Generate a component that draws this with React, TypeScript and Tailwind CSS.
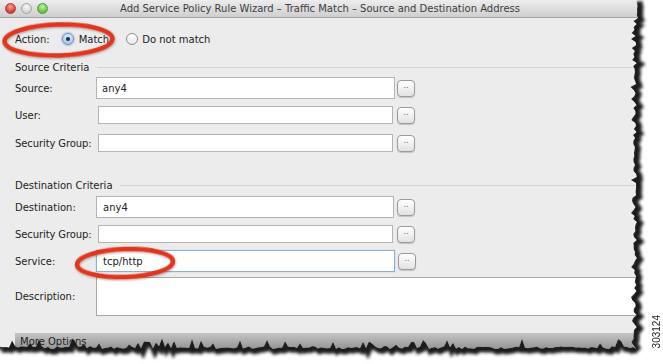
import React from "react";

function rnd(i: number) {
  const x = Math.sin(i * 12.9898 + 78.233) * 43758.5453;
  return x - Math.floor(x);
}

function tornPoints() {
  const pts: [number, number][] = [];
  // right edge, top to bottom
  for (let y = 0; y <= 344; y += 3) {
    let x = 633 + rnd(y) * 4;
    if (rnd(y + 500) > 0.85) x -= 3;
    if (y < 20) x = 636 + rnd(y) * 2;
    pts.push([x, y]);
  }
  // bottom edge, right to left
  for (let x = 636; x >= 0; x -= 3) {
    let y = 346 + rnd(x + 1000) * 3;
    if (rnd(x + 2000) > 0.82) y -= 4 + rnd(x + 3000) * 5;
    pts.push([x, y]);
  }
  pts.push([0, 348]);
  return pts;
}

const PTS = tornPoints();
const polyStr = PTS.map((p) => `${p[0].toFixed(1)},${p[1].toFixed(1)}`).join(" L");
const windowPath = `M0,0 L${polyStr} Z`;
const outsidePath = `M0,0 H663 V364 H0 Z ${windowPath}`;
const edgeLine = `M${polyStr}`;

function TornOverlay() {
  return (
    <svg className="pointer-events-none absolute left-0 top-0" width={663} height={364}>
      <defs>
        <filter id="blur" x="-10%" y="-10%" width="120%" height="120%">
          <feGaussianBlur stdDeviation="1.7" />
        </filter>
        <clipPath id="outside">
          <path d={outsidePath} clipRule="evenodd" />
        </clipPath>
      </defs>
      <path d={outsidePath} fill="#ffffff" fillRule="evenodd" />
      <g clipPath="url(#outside)">
        <path d={edgeLine} transform="translate(2,1.5)" fill="none" stroke="#1a1a1a" strokeWidth={8} filter="url(#blur)" />
      </g>
    </svg>
  );
}

function Ellipses() {
  return (
    <svg className="pointer-events-none absolute left-0 top-0" width={663} height={364}>
      <defs>
        <filter id="sh" x="-20%" y="-20%" width="140%" height="140%">
          <feDropShadow dx="0.5" dy="1" stdDeviation="0.8" floodColor="#000" floodOpacity="0.35" />
        </filter>
      </defs>
      <ellipse cx={58.5} cy={40} rx={54} ry={15.5} fill="none" stroke="#e1341f" strokeWidth={4.5} filter="url(#sh)" transform="rotate(-1.5 58 40)" />
      <ellipse cx={125} cy={263} rx={48} ry={14} fill="none" stroke="#e1341f" strokeWidth={4.5} filter="url(#sh)" transform="rotate(-2 125 263)" />
    </svg>
  );
}

function Btn({ ml }: { ml: string }) {
  return (
    <div
      className={`${ml} flex h-[17px] w-[18px] items-start justify-center rounded-[4px] border border-[#9a9a9a] bg-gradient-to-b from-white to-[#e2e2e2] shadow-[0_1px_1px_rgba(0,0,0,0.18)] text-[8px] leading-[10px] text-[#666]`}
    >
      ..
    </div>
  );
}

function Radio({ checked }: { checked?: boolean }) {
  return checked ? (
    <div className="flex h-[12px] w-[12px] items-center justify-center rounded-full border border-[#6f93c0] bg-gradient-to-b from-[#dbe8f6] to-[#a9c6e8] shadow-[0_0_1px_1px_rgba(120,160,210,0.5)]">
      <div className="h-[4px] w-[4px] rounded-full bg-[#1f2f45]" />
    </div>
  ) : (
    <div className="h-[12px] w-[12px] rounded-full border border-[#8d8d8d] bg-gradient-to-b from-white to-[#e9e9e9]" />
  );
}

function SectionHeader({ title, mt }: { title: string; mt: string }) {
  return (
    <div className={`${mt} flex h-[14px] items-center`}>
      <span className="whitespace-nowrap">{title}</span>
      <div className="ml-[7px] h-px flex-1 bg-[#d3d3d3]" />
    </div>
  );
}

export default function App() {
  return (
    <div className="relative h-[364px] w-[663px] overflow-hidden bg-white font-['DejaVu_Sans',sans-serif] text-[10px] text-[#222]">
      <div className="flex h-[360px] w-[645px] flex-col bg-[#ececec]">
        {/* Title bar */}
        <div className="flex h-[18px] items-center border-b border-[#a3a3a3] bg-gradient-to-b from-[#ededed] to-[#cfcfcf]">
          <div className="flex w-[48px] items-center gap-[5px] pl-[5px]">
            <div className="h-[11px] w-[11px] rounded-full border border-[#b13a33] bg-[radial-gradient(circle_at_50%_30%,#f7a39c,#e0443e_60%,#c02d26)]" />
            <div className="h-[11px] w-[11px] rounded-full border border-[#a4a4a4] bg-[radial-gradient(circle_at_50%_30%,#fafafa,#d8d8d8_60%,#c4c4c4)]" />
            <div className="h-[11px] w-[11px] rounded-full border border-[#4e9a3a] bg-[radial-gradient(circle_at_50%_30%,#c9f0a8,#6fc84c_60%,#4aa12e)]" />
          </div>
          <div className="flex-1 whitespace-nowrap text-center text-[#3c3c3c]">
            Add Service Policy Rule Wizard – Traffic Match – Source and Destination Address
          </div>
          <div className="w-[53px]" />
        </div>

        <div className="flex flex-col pl-[15px]">
          {/* Action */}
          <div className="mt-[13px] flex h-[16px] items-center">
            <span>Action:</span>
            <div className="ml-[12px]">
              <Radio checked />
            </div>
            <span className="ml-[5px]">Match</span>
            <div className="ml-[17px]">
              <Radio />
            </div>
            <span className="ml-[4px]">Do not match</span>
          </div>

          <SectionHeader title="Source Criteria" mt="mt-[13px]" />

          <div className="mt-[3px] flex h-[22px] items-center">
            <span className="w-[81px]">Source:</span>
            <div className="flex h-[22px] w-[299px] items-center border border-[#b4b4b4] bg-white pl-[5px]">any4</div>
            <Btn ml="ml-[2px]" />
          </div>
          <div className="mt-[7px] flex h-[18px] items-center">
            <span className="w-[83px]">User:</span>
            <div className="h-[18px] w-[295px] border border-[#b4b4b4] bg-white" />
            <Btn ml="ml-[4px]" />
          </div>
          <div className="mt-[10px] flex h-[18px] items-center">
            <span className="w-[83px] whitespace-nowrap tracking-[-0.1px]">Security Group:</span>
            <div className="h-[18px] w-[295px] border border-[#b4b4b4] bg-white" />
            <Btn ml="ml-[4px]" />
          </div>

          <SectionHeader title="Destination Criteria" mt="mt-[26px]" />

          <div className="mt-[4px] flex h-[22px] items-center">
            <span className="w-[81px]">Destination:</span>
            <div className="flex h-[22px] w-[298px] items-center border border-[#b4b4b4] bg-white pl-[6px]">any4</div>
            <Btn ml="ml-[3px]" />
          </div>
          <div className="mt-[7px] flex h-[18px] items-center">
            <span className="w-[83px] whitespace-nowrap tracking-[-0.1px]">Security Group:</span>
            <div className="h-[18px] w-[295px] border border-[#b4b4b4] bg-white" />
            <Btn ml="ml-[4px]" />
          </div>
          <div className="mt-[7px] flex h-[22px] items-center">
            <span className="w-[81px]">Service:</span>
            <div className="flex h-[22px] w-[299px] items-center border border-[#8fb0d6] bg-white pl-[6px] shadow-[0_0_1px_rgba(100,150,210,0.6)]">tcp/http</div>
            <Btn ml="ml-[3px]" />
          </div>
          <div className="mt-[5px] flex h-[39px] items-center">
            <span className="w-[81px]">Description:</span>
            <div className="h-[39px] flex-1 border border-[#a9a9a9] bg-white" />
          </div>

          <div className="mt-[17px] flex h-[16px] items-center bg-gradient-to-b from-[#c6c6c6] to-[#949494] pl-[5px] text-[#1e1e1e]">
            More Options
          </div>
        </div>
      </div>

      <TornOverlay />
      <Ellipses />

      <div className="absolute left-[651px] top-[315px] rotate-180 font-['Liberation_Sans',Arial,sans-serif] text-[10px] leading-[12px] text-[#222] [writing-mode:vertical-rl]">
        303124
      </div>
    </div>
  );
}
